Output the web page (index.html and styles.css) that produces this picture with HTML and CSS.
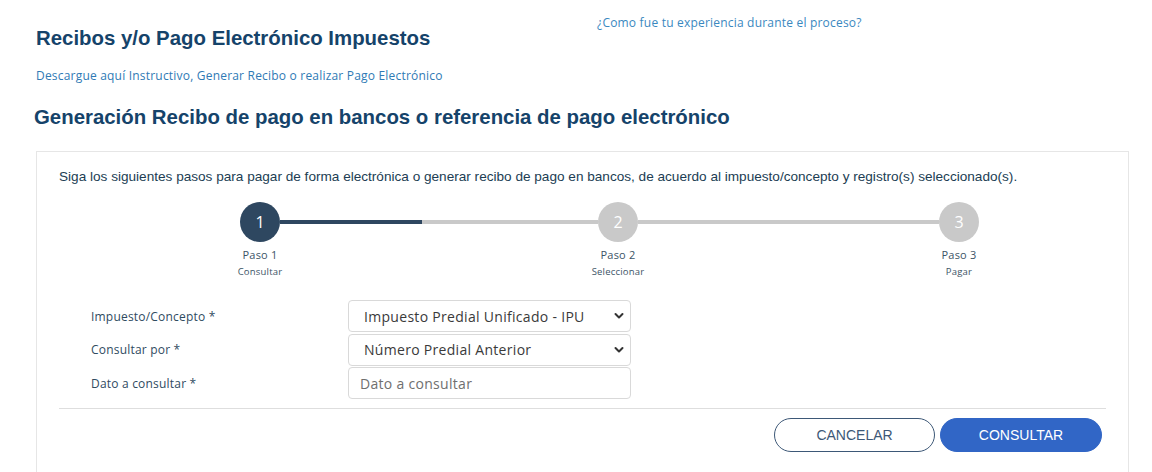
FILE: index.html
```html
<!DOCTYPE html>
<html lang="es">
<head>
<meta charset="utf-8">
<title>Recibos y/o Pago Electrónico Impuestos</title>
<link rel="stylesheet" href="styles.css">
</head>
<body>
<div class="page">
  <div class="top">
    <div class="intro">
      <h1 class="title">Recibos y/o Pago Electrónico Impuestos</h1>
      <a class="link" href="#">Descargue aquí Instructivo, Generar Recibo o realizar Pago Electrónico</a>
    </div>
    <a class="survey" href="#">¿Como fue tu experiencia durante el proceso?</a>
  </div>

  <h2 class="subtitle">Generación Recibo de pago en bancos o referencia de pago electrónico</h2>

  <section class="card">
    <p class="lead">Siga los siguientes pasos para pagar de forma electrónica o generar recibo de pago en bancos, de acuerdo al impuesto/concepto y registro(s) seleccionado(s).</p>

    <div class="stepper">
      <div class="step active">
        <div class="circle">1</div>
        <div class="step-name">Paso 1</div>
        <div class="step-desc">Consultar</div>
      </div>
      <div class="connector first"><span class="fill"></span></div>
      <div class="step">
        <div class="circle">2</div>
        <div class="step-name">Paso 2</div>
        <div class="step-desc">Seleccionar</div>
      </div>
      <div class="connector second"></div>
      <div class="step">
        <div class="circle">3</div>
        <div class="step-name">Paso 3</div>
        <div class="step-desc">Pagar</div>
      </div>
    </div>

    <form class="form">
      <label class="label" for="impuesto">Impuesto/Concepto *</label>
      <div class="select-wrap">
        <select id="impuesto" class="control select">
          <option>Impuesto Predial Unificado - IPU</option>
        </select>
        <svg class="chev" width="10" height="8" viewBox="0 0 10 8"><path d="M1.5 2 L5 5.5 L8.5 2" fill="none" stroke="#333" stroke-width="2" stroke-linecap="round" stroke-linejoin="round"/></svg>
      </div>

      <label class="label" for="consultar">Consultar por *</label>
      <div class="select-wrap">
        <select id="consultar" class="control select">
          <option>Número Predial Anterior</option>
        </select>
        <svg class="chev" width="10" height="8" viewBox="0 0 10 8"><path d="M1.5 2 L5 5.5 L8.5 2" fill="none" stroke="#333" stroke-width="2" stroke-linecap="round" stroke-linejoin="round"/></svg>
      </div>

      <label class="label" for="dato">Dato a consultar *</label>
      <div class="select-wrap">
        <input id="dato" class="control input" type="text" placeholder="Dato a consultar">
      </div>
    </form>

    <hr class="divider">

    <div class="actions">
      <button class="btn btn-outline" type="button">CANCELAR</button>
      <button class="btn btn-primary" type="button">CONSULTAR</button>
    </div>
  </section>
</div>
</body>
</html>
```

FILE: styles.css
```css
* {
  box-sizing: border-box;
}

html, body {
  margin: 0;
  padding: 0;
  background: #ffffff;
}

body {
  font-family: "Open Sans", "Liberation Sans", Arial, sans-serif;
  color: #2f4b5f;
  overflow: hidden;
}

.page {
  padding: 0 0 0 34px;
  width: 1152px;
}

.top {
  display: grid;
  grid-template-columns: 563px 1fr;
}

.intro {
  padding-left: 2px;
}

.title {
  margin: 26px 0 0;
  font-family: "Liberation Sans", Arial, sans-serif;
  font-weight: 700;
  font-size: 20.4px;
  line-height: 24px;
  color: #15436a;
}

.link {
  display: block;
  margin-top: 18px;
  font-size: 12px;
  letter-spacing: 0.2px;
  line-height: 16px;
  color: #2f7ab5;
  text-decoration: none;
}

.survey {
  display: block;
  margin-top: 15px;
  font-size: 12px;
  letter-spacing: 0.2px;
  line-height: 16px;
  color: #3a88c0;
  text-decoration: none;
}

.subtitle {
  margin: 21px 0 0;
  font-family: "Liberation Sans", Arial, sans-serif;
  font-weight: 700;
  font-size: 20.4px;
  line-height: 24px;
  color: #15436a;
}

.card {
  margin-top: 22px;
  margin-left: 2px;
  width: 1093px;
  border: 1px solid #e6e6e6;
  border-bottom: none;
  padding: 17px 21px 20px 22px;
  height: 340px;
}

.lead {
  margin: 0;
  font-family: "Liberation Sans", Arial, sans-serif;
  font-size: 13.6px;
  line-height: 16px;
  color: #213d53;
}

.stepper {
  display: flex;
  margin: 17px 0 0 181px;
}

.step {
  width: 40px;
  display: flex;
  flex-direction: column;
  align-items: center;
  flex: none;
}

.circle {
  width: 40px;
  height: 40px;
  border-radius: 50%;
  background: #c9c9c9;
  color: #ffffff;
  font-size: 16px;
  line-height: 40px;
  text-align: center;
}

.step.active .circle {
  background: #2e4760;
}

.step-name {
  margin-top: 6px;
  font-size: 11px;
  letter-spacing: 0.2px;
  line-height: 14px;
  color: #3c5466;
  white-space: nowrap;
}

.step-desc {
  margin-top: 4px;
  font-size: 9.5px;
  letter-spacing: 0.2px;
  line-height: 12px;
  color: #3c5466;
  white-space: nowrap;
}

.connector {
  flex: none;
  height: 4px;
  margin-top: 18px;
  background: #c9c9c9;
}

.connector.first {
  width: 318px;
}

.connector.second {
  width: 301px;
}

.connector .fill {
  display: block;
  width: 142px;
  height: 4px;
  background: #2e4760;
}

.form {
  margin: 22px 0 0 32px;
  display: grid;
  grid-template-columns: 257px 283px;
  grid-auto-rows: 32px;
  row-gap: 1.5px;
  align-items: center;
}

.label {
  font-size: 12px;
  letter-spacing: 0.2px;
  color: #2f4b5f;
}

.select-wrap {
  position: relative;
  height: 32px;
}

.control {
  width: 283px;
  height: 32px;
  border: 1px solid #d9d9d9;
  border-radius: 4px;
  background: #ffffff;
  font-family: "Open Sans", "Liberation Sans", Arial, sans-serif;
  font-size: 14px;
  letter-spacing: 0.3px;
  color: #3a3a3a;
  margin: 0;
  outline: none;
}

.select {
  appearance: none;
  -webkit-appearance: none;
  padding: 0 30px 0 15px;
}

.input {
  padding: 0 11px;
}

.input::placeholder {
  color: #6f6f6f;
}

.chev {
  position: absolute;
  right: 7px;
  top: 12px;
  pointer-events: none;
}

.divider {
  margin: 9px 0 0;
  border: none;
  border-top: 1px solid #dedede;
  width: 1047px;
}

.actions {
  display: flex;
  justify-content: flex-end;
  gap: 5px;
  margin: 9px 5px 0 0;
}

.btn {
  width: 162px;
  height: 34px;
  border-radius: 17px;
  font-family: "Liberation Sans", Arial, sans-serif;
  font-size: 14px;
  cursor: pointer;
}

.btn-outline {
  width: 161px;
  background: #ffffff;
  border: 1px solid #3d5877;
  color: #3d5877;
}

.btn-primary {
  background: #3166c6;
  border: 1px solid #3166c6;
  color: #ffffff;
}
```
